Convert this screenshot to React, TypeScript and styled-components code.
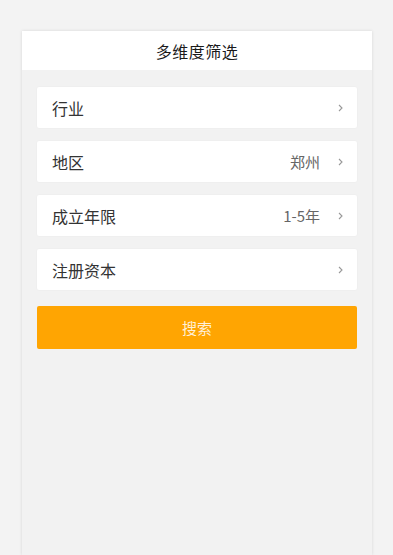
import React from "react";
import styled, { createGlobalStyle } from "styled-components";

const GlobalStyle = createGlobalStyle`
  html, body {
    margin: 0;
    padding: 0;
    height: 100%;
    background: #f3f3f3;
    font-family: "Noto Sans CJK SC", "Noto Sans", sans-serif;
  }
  #root {
    height: 100%;
  }
`;

const filters = [
  { label: "行业", value: "" },
  { label: "地区", value: "郑州" },
  { label: "成立年限", value: "1-5年" },
  { label: "注册资本", value: "" },
];

const Chevron = () => (
  <ChevronSvg viewBox="0 0 5 8" width="5" height="8">
    <polyline points="1,1 4,4 1,7" fill="none" stroke="#999" strokeWidth="1.1" />
  </ChevronSvg>
);

const App = () => {
  return (
    <Page>
      <GlobalStyle />
      <Panel>
        <Header>多维度筛选</Header>

        <Body>
          {filters.map((item) => (
            <FilterRow key={item.label}>
              <Label>{item.label}</Label>
              <Value>{item.value}</Value>
              <Chevron />
            </FilterRow>
          ))}

          <SearchButton>搜索</SearchButton>
        </Body>
      </Panel>
    </Page>
  );
};

const Page = styled.div`
  min-height: 555px;
  padding: 31px 21px 0 22px;
  box-sizing: border-box;

  display: flex;
  flex-direction: column;
`;

const Panel = styled.section`
  flex-grow: 1;
  min-height: 524px;

  display: flex;
  flex-direction: column;

  background: #f2f2f2;
  box-shadow: 0 0 3px rgba(0, 0, 0, 0.12);
`;

const Header = styled.div`
  height: 39px;

  display: flex;
  align-items: center;
  justify-content: center;

  background: #fff;
  color: #1a1a1a;
  font-size: 16px;
  letter-spacing: 0.5px;
`;

const Body = styled.div`
  padding: 17px 15px 0 15px;

  display: flex;
  flex-direction: column;
  gap: 13px;
`;

const FilterRow = styled.div`
  height: 41px;
  padding: 0 14px 0 15px;

  display: flex;
  align-items: center;

  background: #fff;
  border-radius: 2px;
  box-shadow: 0 0 2px rgba(0, 0, 0, 0.05);
`;

const Label = styled.span`
  flex-grow: 1;

  color: #333;
  font-size: 16px;
`;

const Value = styled.span`
  margin-right: 18px;

  color: #666;
  font-size: 15px;
`;

const ChevronSvg = styled.svg`
  display: block;
`;

const SearchButton = styled.button`
  height: 43px;
  margin-top: 3px;

  border: none;
  border-radius: 2px;
  background: #ffa502;
  color: rgba(255, 255, 255, 0.85);
  font-family: inherit;
  font-size: 15px;
`;

export default App;
